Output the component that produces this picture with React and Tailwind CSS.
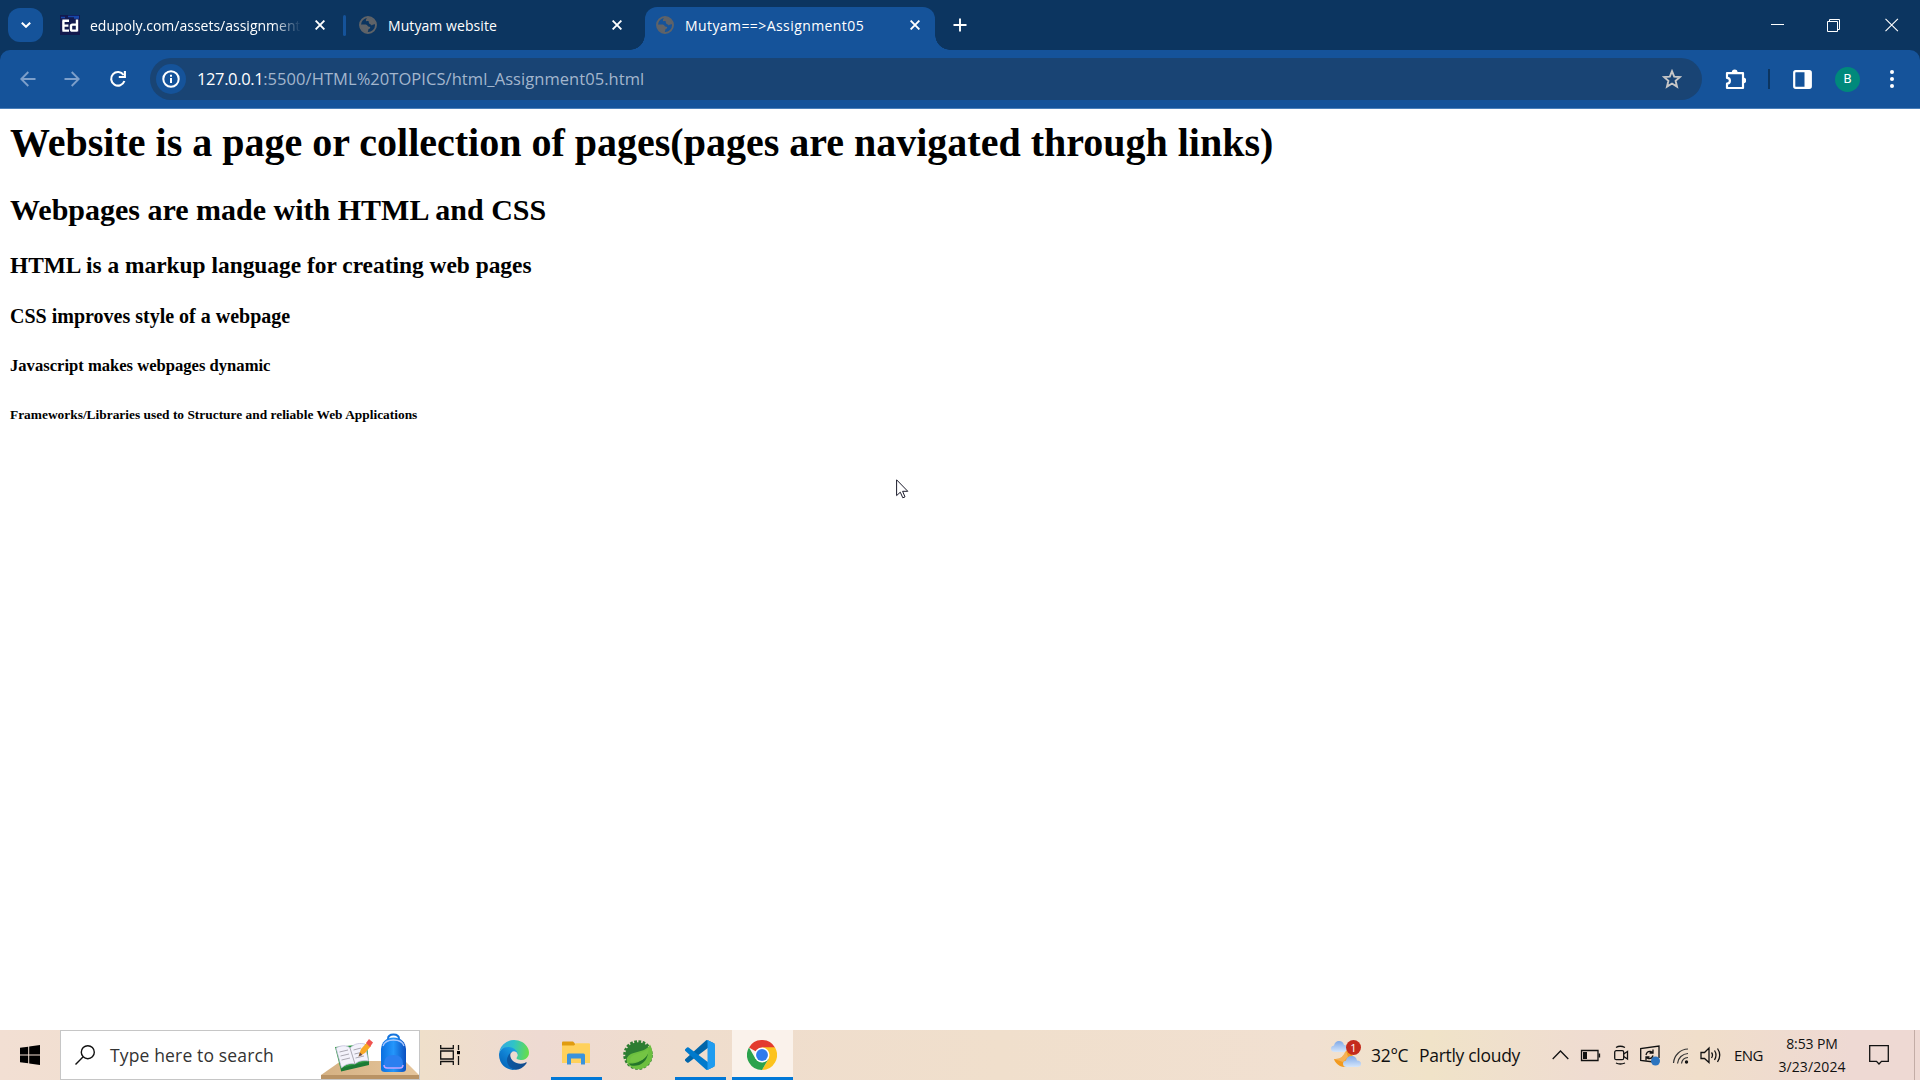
import React from "react";

const ui = "font-['Open_Sans','Noto_Sans',sans-serif]";

function Globe() {
  return (
    <svg viewBox="0 0 18 18" className="size-[18px] shrink-0">
      <circle cx="9" cy="9" r="8" fill="none" stroke="#5f6368" strokeWidth="1.9" />
      <path d="M8.2 1.5 C11 1 15.8 3 16.5 7.6 C15.5 9.2 13.8 8.2 12.8 9.4 C11.6 8 9.6 7.8 9.8 6.2 C10 4.8 8.4 5 7.6 5.2 C6.6 5.4 6.8 3.6 7.4 3 Z" fill="#5f6368" />
      <path d="M1.4 8.6 H6.8 C8.8 8.8 8.4 10.8 10.2 10.8 C11.8 11 11.4 12.6 10.2 12.8 C9 13 9.6 14.4 8.6 16.6 C4 16.4 1 12.4 1.4 8.6 Z" fill="#5f6368" />
    </svg>
  );
}

function Cross() {
  return (
    <svg viewBox="0 0 10 10" className="size-[10px] shrink-0" stroke="#fff" strokeWidth="1.9" fill="none">
      <path d="M.6 .6 L9.4 9.4 M9.4 .6 L.6 9.4" />
    </svg>
  );
}

function TabStrip() {
  return (
    <header className={`flex h-[50px] items-center bg-[#0c3560] text-[14px] text-white ${ui}`}>
      <div className="ml-2 flex h-[34px] w-[35px] shrink-0 items-center justify-center rounded-xl bg-[#15539a]">
        <svg viewBox="0 0 10 6" className="h-[6px] w-[10px]" fill="none" stroke="#fff" strokeWidth="2"><path d="M.8 .7 L5 4.8 L9.2 .7" /></svg>
      </div>
      <div className="ml-[17px] flex w-[286px] shrink-0 items-center">
        <svg viewBox="0 0 20 20" className="size-5 shrink-0">
          <rect width="20" height="20" fill="#131a4e" />
          <path d="M1 2.5 H5 M8 1.5 H19 M14 3 H19" stroke="#1746a8" strokeWidth="1.6" />
          <path d="M2.4 5.8 H9 M3.4 5.8 V15.6 M2.4 10.6 H8.4 M2.4 15.6 H9" stroke="#fff" strokeWidth="2.4" fill="none" />
          <path d="M17 4.6 V16.6 M16 9.6 H12.4 Q11 9.6 11 11 V14.2 Q11 15.6 12.4 15.6 H17" stroke="#fff" strokeWidth="2.4" fill="none" />
        </svg>
        <div className="ml-[10px] w-[213px] shrink-0 whitespace-nowrap [mask-image:linear-gradient(to_right,#000_86%,transparent_99%)]">
          edupoly.com/assets/assignment
        </div>
        <div className="ml-[12px]"><Cross /></div>
        <div className="ml-[18px] h-[21px] w-[3px] shrink-0 rounded-sm bg-[#15539a]" />
      </div>
      <div className="flex w-[299px] shrink-0 items-center pl-[13px]">
        <Globe />
        <span className="ml-[11px] grow tracking-[0.07px] whitespace-nowrap">Mutyam website</span>
        <div className="mr-[23px]"><Cross /></div>
      </div>
      <div className="relative mt-[7px] flex h-[43px] w-[290px] shrink-0 items-center rounded-t-xl bg-[#15539a] pb-[7px] pl-[11px]">
        <div className="absolute bottom-0 -left-[15px] size-[15px] bg-[radial-gradient(circle_at_0_0,transparent_14.5px,#15539a_15px)]" />
        <div className="absolute -right-[15px] bottom-0 size-[15px] bg-[radial-gradient(circle_at_100%_0,transparent_14.5px,#15539a_15px)]" />
        <Globe />
        <span className="ml-[11px] grow tracking-[0.42px] whitespace-nowrap">{"Mutyam==>Assignment05"}</span>
        <div className="mr-[15px]"><Cross /></div>
      </div>
      <svg viewBox="0 0 14 14" className="ml-[18px] size-[14px]" stroke="#fff" strokeWidth="1.9"><path d="M.5 7 H13.5 M7 .5 V13.5" /></svg>
      <svg viewBox="0 0 128 14" className="mr-[21px] ml-auto h-[14px] w-[128px]" fill="none" stroke="#fff">
        <path d="M0 6.5 H13" />
        <path d="M56.500 3.500 H66.500 V13.500 H56.500 Z M58.500 3.500 V1.500 H68.500 V11.500 H66.500" />
        <path d="M114.500 .8 L126.900 13.200 M126.900 .8 L114.500 13.200" strokeWidth="1.1" />
      </svg>
    </header>
  );
}

function Toolbar() {
  return (
    <div className="h-[59px] bg-[#0c3560]">
      <div className="flex h-[59px] items-center rounded-t-[10px] border-b border-[#4a7fb9] bg-[#15539a]">
        <svg viewBox="0 0 16 16" className="ml-5 size-4" fill="none" stroke="#7d9fca" strokeWidth="1.9"><path d="M15.500 8 H1.500 M8.300 1 L1.300 8 L8.300 15" /></svg>
        <svg viewBox="0 0 16 16" className="ml-7 size-4" fill="none" stroke="#7d9fca" strokeWidth="1.9"><path d="M.5 8 H14.500 M7.700 1 L14.700 8 L7.700 15" /></svg>
        <svg viewBox="0 0 18 18" className="ml-[29px] size-[18px]" fill="none" stroke="#fff" strokeWidth="2.1"><path d="M14.600 5 A6.800 6.800 0 1 0 15.400 11" /><path d="M15.900 1 V7 H9.800" /></svg>
        <div className="ml-[23px] flex h-[42px] w-[1552px] items-center rounded-full bg-[#194474] pr-5 pl-[6px]">
          <div className="flex size-[30px] items-center justify-center rounded-full bg-[#15539a]">
            <svg viewBox="0 0 18 18" className="size-[18px]" fill="none" stroke="#fff" strokeWidth="2"><circle cx="9" cy="9" r="7.700" /><path d="M9 8 V13 M9 4.700 V6.700" /></svg>
          </div>
          <div className={`ml-[11px] grow text-[16.500px] whitespace-nowrap text-[#a3b6cd] ${ui}`}>
            <span className="tracking-[-0.38px] text-white">127.0.0.1</span><span className="tracking-[0.06px]">:5500/HTML%20TOPICS/html_Assignment05.html</span>
          </div>
          <svg viewBox="0 0 20 20" className="size-5" fill="none" stroke="#c7c7c7" strokeWidth="1.900"><path d="M10 2.200 L12.200 7.600 L18 8 L13.600 11.800 L15 17.600 L10 14.500 L5 17.600 L6.400 11.800 L2 8 L7.800 7.600 Z" /></svg>
        </div>
        <svg viewBox="0 0 21 21" className="ml-[23px] size-[21px]">
          <path d="M2.500 4.200 H18 V19 H2 V14.700 A2.900 2.900 0 0 0 2 8.900 V4.200 Z" fill="none" stroke="#fff" strokeWidth="2.200" strokeLinejoin="round" />
          <path d="M6.800 3.500 A2.900 2.900 0 0 1 12.600 3.500 Z M18.300 8.500 A2.900 2.900 0 0 1 18.300 14.300 Z" fill="#fff" />
        </svg>
        <div className="ml-[22px] h-5 w-[2px] bg-[#0c3560]" />
        <svg viewBox="0 0 19 19" className="ml-[23px] size-[19px]"><rect x="1.200" y="1.200" width="16.600" height="16.600" rx="1.500" fill="none" stroke="#fff" strokeWidth="2.200" /><path d="M11.500 1 H18 V18 H11.500 Z" fill="#fff" /></svg>
        <div className="ml-[23px] flex size-[25px] items-center justify-center rounded-full bg-[#00897b] font-[Roboto,sans-serif] text-[13px] text-white">B</div>
        <svg viewBox="0 0 4 18" className="ml-[30px] h-[18px] w-1" fill="#fff"><circle cx="2" cy="2" r="2" /><circle cx="2" cy="9" r="2" /><circle cx="2" cy="16" r="2" /></svg>
      </div>
    </div>
  );
}

function Page() {
  return (
    <main className="relative h-[921px] bg-white px-[10px] pt-[11px] font-['Liberation_Serif',serif] font-bold whitespace-nowrap text-black">
      <h1 className="text-[40px] leading-[45px]">Website is a page or collection of pages(pages are navigated through links)</h1>
      <h2 className="mt-[28px] text-[30px] leading-[34px]">Webpages are made with HTML and CSS</h2>
      <h3 className="mt-[25px] text-[23.400px] leading-[26px]">HTML is a markup language for creating web pages</h3>
      <h4 className="mt-[27px] text-[20px] leading-[22px]">CSS improves style of a webpage</h4>
      <h5 className="mt-[29px] text-[16.600px] leading-[19px]">Javascript makes webpages dynamic</h5>
      <h6 className="mt-[32px] text-[13.400px] leading-[15px]">Frameworks/Libraries used to Structure and reliable Web Applications</h6>
      <svg viewBox="0 0 13 20" className="absolute top-[370px] left-[896px] h-5 w-[13px]">
        <path d="M.6 .8 V16.600 L4.300 13.200 L6.800 18.800 L9 17.900 L6.600 12.300 H11.800 Z" fill="#fff" stroke="#1b1b2b" strokeWidth="1" />
      </svg>
    </main>
  );
}

function DeskArt() {
  return (
    <svg viewBox="0 0 98 48" className="h-[48px] w-[98px]">
      <defs>
        <linearGradient id="bag" x1="0" x2="1"><stop offset="0" stopColor="#0a6fe0" /><stop offset=".5" stopColor="#2496fb" /><stop offset="1" stopColor="#0a4fc0" /></linearGradient>
        <linearGradient id="desk" x1="0" x2="1"><stop offset="0" stopColor="#d5b183" /><stop offset="1" stopColor="#e5c59c" /></linearGradient>
      </defs>
      <path d="M0 44 L20 30 H84 L98 44 Z" fill="url(#desk)" /><path d="M0 44 H98 V48 H0 Z" fill="#b99365" />
      <path d="M14 16 L20 40 L48 33 L46 13 Z" fill="#2c9a3f" /><path d="M20 37 L48 30 L48 34 L20 40.500 Z" fill="#1c7a36" />
      <path d="M15 17 C20 14 26 14 29 17 C34 12 39 12 44 13 L47.500 30 C42 29 37 30 34 33 C30 32 24 33 20.500 37 Z" fill="#f3f2fb" stroke="#b9b5d6" strokeWidth=".7" />
      <path d="M29 17 L34 33 M18.500 21 L27 19 M19.500 25 L28 23 M20.500 29 L29 27 M32.500 19 L40 17 M33.500 23 L42 21 M34.500 27 L43 25" stroke="#98959f" strokeWidth=".8" />
      <path d="M37.500 25.500 L40 18 L46 11.500 L50 15 L44 22 Z" fill="#f9a825" /><path d="M45 12 L48 8 L52 11.500 L49 16 Z" fill="#ef5350" /><path d="M37.500 25.500 L39 21.500 L41.500 24 Z" fill="#6d4c41" />
      <path d="M67 8 Q67 3.500 72.500 3.500 Q78 3.500 78 8" fill="none" stroke="#1574dc" strokeWidth="2" />
      <path d="M60 18 Q61 7 72.500 6.500 Q84 7 85 18 V38 Q85 41 81 41 H64 Q60 41 60 38 Z" fill="url(#bag)" />
      <path d="M62 15 Q64 9 72.500 9 Q81 9 83 15" fill="none" stroke="#a8c8ff" strokeWidth="1.300" />
      <path d="M63 33 Q63 24 72.500 24 Q82 24 82 33 V37 H63 Z" fill="#2b7ff0" /><path d="M63 34 Q63 37 66 37 H79 Q82 37 82 34" fill="none" stroke="#c4a5ff" strokeWidth="1.400" />
    </svg>
  );
}

function EdgeIcon() {
  return (
    <svg viewBox="0 0 256 256" className="size-[30px]">
      <defs>
        <linearGradient id="e1" x1="60" x2="240" y1="177" y2="177" gradientUnits="userSpaceOnUse"><stop stopColor="#0c59a4" /><stop offset="1" stopColor="#114a8b" /></linearGradient>
        <linearGradient id="e2" x1="150" x2="40" y1="100" y2="225" gradientUnits="userSpaceOnUse"><stop stopColor="#1b9de2" /><stop offset=".5" stopColor="#0f7fd2" /><stop offset="1" stopColor="#0669bc" /></linearGradient>
        <linearGradient id="e3" x1="10" x2="250" y1="60" y2="100" gradientUnits="userSpaceOnUse"><stop stopColor="#35a9e0" /><stop offset=".45" stopColor="#2fc3c8" /><stop offset="1" stopColor="#66dd4b" /></linearGradient>
      </defs>
      <path d="M231 190.500a94 94 0 0 1-10.500 4.700 102 102 0 0 1-36 6.500c-47.300 0-88.600-32.500-88.600-74.400a31.500 31.500 0 0 1 16.500-27.300c-42.900 1.800-53.900 46.500-53.900 72.600 0 74 68.100 81.500 82.800 81.500 7.900 0 19.900-2.300 27-4.600l1.300-.4a128 128 0 0 0 66.600-52.800 4 4 0 0 0-5.200-5.800z" fill="url(#e1)" />
      <path d="M105.700 241.400a79 79 0 0 1-22.700-21.300 80.700 80.700 0 0 1 29.500-120c3.100-1.500 8.500-4.100 15.600-4a32.400 32.400 0 0 1 25.700 13 31.900 31.900 0 0 1 6.300 18.700c0-.2 24.500-79.600-80-79.600-43.900 0-80 41.700-80 78.200a130 130 0 0 0 12.100 56 128 128 0 0 0 156.400 67.100 75.500 75.500 0 0 1-62.800-8z" fill="url(#e2)" />
      <path d="M152.300 148.900c-.9 1-3.400 2.500-3.400 5.600 0 2.600 1.700 5.200 4.800 7.300 14.300 10 41.400 8.600 41.500 8.600a59.600 59.600 0 0 0 30.300-8.300 61.400 61.400 0 0 0 30.400-52.900c.3-22.400-8-37.300-11.300-43.900C223.500 23.900 177.700 0 128 0A128 128 0 0 0 0 126.200c.5-36.500 36.800-66 80-66 3.500 0 23.500.3 42 10 16.300 8.600 24.900 18.900 30.800 29.200 6.200 10.700 7.300 24.100 7.300 29.500s-2.700 13.300-7.800 19.900z" fill="url(#e3)" />
    </svg>
  );
}

function ExplorerIcon() {
  return (
    <svg viewBox="0 0 28 24" className="mb-1 h-6 w-7">
      <path d="M0 1.500 Q0 .5 1 .5 H11 L13 2.500 V6 H0 Z" fill="#e09c10" />
      <path d="M13 2.500 H27 V8 H13 Z" fill="#ffd660" /><path d="M0 4.500 H12 L14 2.500 H28 V22 H0 Z" fill="#ffd15c" />
      <path d="M5 23.500 V14 Q5 12.500 6.500 12.500 H21.500 Q23 12.500 23 14 V23.500 H19 V17.500 H9 V23.500 Z" fill="#3a93dc" />
    </svg>
  );
}

function SpringIcon() {
  return (
    <svg viewBox="0 0 30 30" className="size-[30px]">
      <circle cx="15" cy="15" r="12.800" fill="#2d7d32" /><circle cx="15" cy="15" r="13.300" fill="none" stroke="#2d7d32" strokeWidth="3" strokeDasharray="2.700 1.480" />
      <path d="M27 4.500 C29.500 9 30.500 15 28.500 20 C25 28 16 32 8 27 C4 25 3 20 4 18 C8 10 22 14 27 4.500 Z" fill="#6cbf3f" />
      <path d="M5.500 23.500 C13 24 21 21 25 13 C24 22 17 27 8 25.500 Z" fill="#25752b" />
      <path d="M7.500 22 C5.500 12 20 15 25.500 8.500 C26.500 17 18 23 7.500 22 Z" fill="#74c444" />
    </svg>
  );
}

function CodeIcon() {
  return (
    <svg viewBox="0 0 100 100" className="size-[30px]">
      <path d="M96.500 10.800 L75.900 .9 A6.200 6.200 0 0 0 68.800 2.100 L1.300 63.600 A4.200 4.200 0 0 0 1.300 69.800 L6.800 74.800 A4.200 4.200 0 0 0 12.100 75 L93.400 13.400 A4.100 4.100 0 0 1 100 16.700 V16.400 A6.300 6.300 0 0 0 96.500 10.800 Z" fill="#0065a9" />
      <path d="M96.500 89.200 L75.900 99.100 A6.200 6.200 0 0 1 68.800 97.900 L1.300 36.400 A4.200 4.200 0 0 1 1.300 30.200 L6.800 25.200 A4.200 4.200 0 0 1 12.100 25 L93.400 86.600 A4.100 4.100 0 0 0 100 83.300 V83.600 A6.300 6.300 0 0 1 96.500 89.200 Z" fill="#007acc" />
      <path d="M75.900 99.100 A6.200 6.200 0 0 1 68.800 97.900 C71.100 100.200 75 98.600 75 95.300 V4.700 C75 1.400 71.100 -.2 68.800 2.100 A6.200 6.200 0 0 1 75.900 .9 L96.500 10.800 A6.300 6.300 0 0 1 100 16.400 V83.600 A6.300 6.300 0 0 1 96.500 89.200 Z" fill="#1f9cf0" />
    </svg>
  );
}

function ChromeIcon() {
  return (
    <svg viewBox="0 0 48 48" className="size-[30px]">
      <path d="M24 24 L3.200 12 A24 24 0 0 1 44.800 12 Z" fill="#e33b2e" />
      <path d="M24 12 H44.800 A24 24 0 0 1 24 48 L34.400 30 Z" fill="#fcc31e" />
      <path d="M3.200 12 A24 24 0 0 0 24 48 L34.400 30 L24 24 L13.600 30 Z" fill="#2ba24c" />
      <path d="M24 12 H44.800 L34 18 Z" fill="#fcc31e" />
      <circle cx="24" cy="24" r="12" fill="#fff" /><circle cx="24" cy="24" r="9.500" fill="#2f7bed" />
    </svg>
  );
}

function AppSlot({ children, className = "" }) {
  return <div className={`flex h-[50px] items-center justify-center border-b-[3px] pt-[3px] pr-px ${className}`}>{children}</div>;
}

function WeatherIcon() {
  return (
    <svg viewBox="0 0 30 30" className="h-[30px] w-[30px]">
      <defs>
        <linearGradient id="cl" x1="0" y1="0" x2="0" y2="1"><stop offset="0" stopColor="#7fa9e8" /><stop offset="1" stopColor="#d5e6fb" /></linearGradient>
      </defs>
      <path d="M3 19 Q12 20 15 10 Q25 14 21 23 Q16 29 9 26 Q4 23 3 19 Z" fill="#f29a1f" /><path d="M3 19 Q12 20 15 10 L17 17 L12 22 Z" fill="#f7c27a" opacity=".6" />
      <path d="M4 12 Q0 12 0 8.500 Q0 6 3 5.500 Q4 1 8 1 Q12 1 13 5 Q16 5 16 8.500 Q16 12 12 12 Z" fill="url(#cl)" />
      <path d="M15.500 27 Q12 27 12 23.500 Q12 21 15 20.500 Q16 15.500 21 16 Q25 16 26 20.500 Q30 20.500 30 24 Q30 27 26 27 Z" fill="url(#cl)" />
      <circle cx="22.500" cy="7.500" r="7.500" fill="#c42b1c" />
      <text x="22.500" y="11.500" textAnchor="middle" fontFamily="Open Sans" fontSize="11" fill="#fff">1</text>
    </svg>
  );
}

function Tray() {
  return (
    <svg viewBox="0 0 170 24" className="h-6 w-[170px]" fill="none" stroke="#111" strokeWidth="1.300">
      <path d="M.7 16 L8.500 8 L16.300 16" />
      <path d="M29.500 7.500 H46 V17.500 H29.500 Z M47.500 10.500 V14.500" /><path d="M31 9 H35 V16 H31 Z" fill="#111" stroke="none" />
      <rect x="62.700" y="7.700" width="9" height="9" rx="1.500" /><path d="M71.700 11 L75.500 8.500 V16 L71.700 13.500 M64 4.500 Q68 2 73 4.500 M64 20 Q68 22 73 20" />
      <path d="M102 19 L88.700 17.500 V5.500 L107 3 V15" /><path d="M94 12 Q95 8 98.500 8.500 L101 9.500 M101 6.500 V10 H97.500 M101 12.500 Q100 16 96.500 15.500 L94 14.500 M94 17.500 V14 H97.500" /><circle cx="103.500" cy="18" r="4.500" fill="#2c74bf" stroke="none" />
      <path d="M121.500 20 A15 15 0 0 1 136 6 M125.500 20.500 A11 11 0 0 1 136 10.500 M129.500 20.500 A7 7 0 0 1 136 14.500" stroke="#333" strokeWidth="1.200" /><circle cx="134.500" cy="19" r="1.700" fill="#111" stroke="none" />
      <path d="M149 9.500 H152.500 L157 5 V19.500 L152.500 15.500 H149 Z M159.500 9.500 Q161.500 12 159.500 15 M162.500 7.500 Q165.500 12 162.500 17 M165.500 5.500 Q170 12 165.500 19" />
    </svg>
  );
}

function Taskbar() {
  return (
    <footer className={`flex h-[50px] items-center bg-[linear-gradient(90deg,#f2dfd3_0,#f1dfd0_100px,#efdfca_420px,#eedad2_540px,#efddcd_680px,#f0dfcc_1000px,#f1e0d1_1310px,#f0e3c8_1430px,#efdcd1_1590px,#f0deca_1700px,#eed9d3_1850px,#eed9d3_1920px)] whitespace-nowrap text-[#111] ${ui}`}>
      <div className="flex w-[60px] justify-center">
        <svg viewBox="0 0 20 20" className="size-5" fill="#000"><path d="M0 2.800 L8.200 1.700 V9.500 H0 Z M9.200 1.500 L20 0 V9.500 H9.200 Z M0 10.500 H8.200 V18.300 L0 17.200 Z M9.200 10.500 H20 V20 L9.200 18.500 Z" /></svg>
      </div>
      <div className="flex h-[50px] w-[360px] items-center border border-[#c6c6c6] bg-white">
        <svg viewBox="0 0 20 20" className="ml-[14px] size-5" fill="none" stroke="#111" strokeWidth="1.400"><circle cx="12.800" cy="7.200" r="6.500" /><path d="M8.200 11.800 L.5 19.500" /></svg>
        <span className="ml-[15px] grow text-[17.500px] tracking-[0.15px] text-[#333]">Type here to search</span>
        <DeskArt />
      </div>
      <svg viewBox="0 0 20 20" className="ml-5 size-5" fill="none" stroke="#111" strokeWidth="1.300"><path d="M.7 0 V3.500 H13.300 V0 M.7 6 H13.300 V14 H.7 Z M.7 20 V16.500 H13.300 V20 M18.500 0 V5 M18.500 11 V20" /><path d="M17 6 H20 V9.200 H17 Z" fill="#000" stroke="none" /></svg>
      <AppSlot className="ml-[28px] w-[52px] border-transparent"><EdgeIcon /></AppSlot>
      <AppSlot className="ml-[11px] w-[51px] border-[#0078d7]"><ExplorerIcon /></AppSlot>
      <AppSlot className="ml-[11px] w-[51px] border-transparent"><SpringIcon /></AppSlot>
      <AppSlot className="ml-[11px] w-[51px] border-[#0078d7]"><CodeIcon /></AppSlot>
      <AppSlot className="ml-[6px] w-[61px] border-[#0078d7] bg-[#faf2eb]"><ChromeIcon /></AppSlot>
      <div className="ml-[538px] h-[30px]"><WeatherIcon /></div>
      <span className="ml-[10px] w-[48px] text-[17.500px] tracking-[-0.3px]">32°C</span>
      <span className="w-[133px] text-[17.500px] tracking-[-0.3px]">Partly cloudy</span>
      <Tray />
      <span className="ml-[12px] w-[30px] text-[15px] tracking-[-0.6px]">ENG</span>
      <div className="ml-[13px] flex w-[70px] flex-col items-center text-[14px] leading-[23px]">
        <span className="tracking-[-0.1px]">8:53 PM</span><span className="tracking-[0.1px]">3/23/2024</span>
      </div>
      <svg viewBox="0 0 20 20" className="ml-[22px] size-5" fill="none" stroke="#111" strokeWidth="1.300"><path d="M.7 .7 H19.300 V16.300 H12.500 L10 19 L7.500 16.300 H.7 Z" /></svg>
      <div className="ml-[25px] h-[50px] w-px bg-[#c3ada6]" />
    </footer>
  );
}

export default function App() {
  return (
    <div className="h-[1080px] w-[1920px] overflow-hidden">
      <TabStrip />
      <Toolbar />
      <Page />
      <Taskbar />
    </div>
  );
}
